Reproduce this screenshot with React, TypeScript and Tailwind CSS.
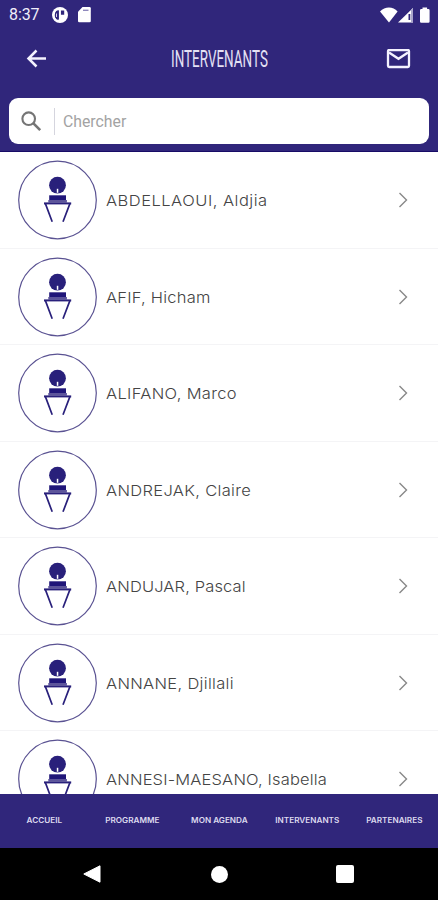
interface Speaker {
  name: string;
  tracking: string;
}

const speakers: Speaker[] = [
  { name: "ABDELLAOUI, Aldjia", tracking: "tracking-[0.45px]" },
  { name: "AFIF, Hicham", tracking: "tracking-[0.2px]" },
  { name: "ALIFANO, Marco", tracking: "tracking-[0.3px]" },
  { name: "ANDREJAK, Claire", tracking: "tracking-[0.3px]" },
  { name: "ANDUJAR, Pascal", tracking: "tracking-[0.12px]" },
  { name: "ANNANE, Djillali", tracking: "tracking-[0.28px]" },
  { name: "ANNESI-MAESANO, Isabella", tracking: "tracking-[0.14px]" },
];

const tabs = ["ACCUEIL", "PROGRAMME", "MON AGENDA", "INTERVENANTS", "PARTENAIRES"];

const StatusBar = () => (
  <div className="flex h-[29px] items-center justify-between pr-[8px] pl-[9px]">
    <div className="flex items-center">
      <span className="w-[43px] font-[Roboto,sans-serif] text-[16px] leading-none tracking-[-0.1px] text-[#f0eefa]">8:37</span>
      <svg width="16" height="16" viewBox="0 0 16 16">
        <circle cx="8" cy="8" r="8" fill="#fff" />
        <path d="M6.8 3.2A5 5 0 0 0 5.6 12.6H6.800zM8.800 3.500h3.400v4.300H8.800z" fill="#30267b" />
        <path d="M6.800 3.200h1.900v10H6.800z" fill="#fff" />
        <path d="M4.600 3.800C2.600 5.300 2.300 10 4.800 12.400h2V3.600z" fill="#30267b" />
        <path d="M4.200 6.500h.8v3.500h-.8z" fill="#fff" />
      </svg>
      <svg className="ml-[10px]" width="13" height="16" viewBox="0 0 13 16">
        <path d="M4.500 0H11.500a1.300 1.300 0 0 1 1.300 1.300V14a1.300 1.300 0 0 1-1.300 1.300H1.300A1.300 1.300 0 0 1 0 14V4.800z" fill="#fff" />
        <path d="M5 2.600h5.500v1.400H5z" fill="#8f89bd" />
      </svg>
    </div>
    <svg width="50" height="16" viewBox="0 0 50 16">
      <path d="M0 4.500C5-.8 13-.8 17.600 4.500L9 15.500z" fill="#fff" />
      <path d="M33 1V15.500H18z" fill="#fff" />
      <path d="M28.500 7h1.800v6h-1.800z" fill="#30267b" />
      <path d="M31 3v12.500h2V1z" fill="#aaa6cc" />
      <path d="M40 3.200a1.200 1.200 0 0 1 1.200-1.200h1.300V.5h4.600V2h1.300a1.200 1.200 0 0 1 1.200 1.200V14.600a1.200 1.200 0 0 1-1.200 1.200h-7.200a1.200 1.200 0 0 1-1.200-1.200z" fill="#fff" />
    </svg>
  </div>
);

const Header = () => (
  <div className="flex h-[60px] items-center justify-between pr-[27px] pl-[26px]">
    <svg width="22" height="20" viewBox="0 0 22 20" fill="none" stroke="#f4f2ff" strokeWidth="2.5">
      <path d="M20 9.500H3M10.500 1.500 2.500 9.500 10.500 17.500" />
    </svg>
    <h1 className="ml-[4px] scale-x-[0.56] font-[Roboto,sans-serif] text-[24px] leading-none font-normal text-[#e4e1f4]">
      INTERVENANTS
    </h1>
    <svg width="25" height="20" viewBox="0 0 25 20" fill="none" stroke="#f4f2ff" strokeWidth="2.3">
      <rect x="2" y="1" width="21" height="17" rx="1.2" />
      <path d="m3 3.500 9.500 6.300L22 3.500" />
    </svg>
  </div>
);

const SearchField = () => (
  <div className="mx-[9px] mt-[9px] flex h-[46px] items-center rounded-[9px] bg-white pl-[12px]">
    <svg width="21" height="21" viewBox="0 0 21 21" fill="none" stroke="#757575">
      <circle cx="7.700" cy="7.700" r="6.300" strokeWidth="2.100" />
      <path d="m12.200 12.200 7 7" strokeWidth="2.600" />
    </svg>
    <div className="ml-[11.5px] h-[27px] w-px bg-[#d5d5de]" />
    <span className="ml-[8.5px] pt-[2px] font-[Roboto,sans-serif] text-[15.8px] leading-none text-[#a3a3a3]">Chercher</span>
  </div>
);

const SpeakerAvatar = () => (
  <svg className="shrink-0" width="80" height="80" viewBox="0 0 80 80">
    <circle cx="40.500" cy="40" r="38.800" fill="#fff" stroke="#5a5292" strokeWidth="1.200" />
    <circle cx="40.500" cy="25.200" r="8.400" fill="#29207b" />
    <path d="M39.800 28.800h1.500v4h-1.500z" fill="#fff" />
    <path d="M32.200 35.300h16.800v5H32.200z" fill="#201679" />
    <path d="M31.300 40h18.600v2.500H31.300z" fill="#5c549b" />
    <path d="M27 42.400h27.200v2H27z" fill="#29207b" />
    <path d="M28.300 43.400 35.200 61.800M53 43.400 46 61.800" fill="none" stroke="#29207b" strokeWidth="1.700" />
  </svg>
);

const SpeakerRow = ({ name, tracking }: Speaker) => (
  <div className="flex h-[96.5px] shrink-0 items-center border-b border-[#f4f4f6] pt-[1px] pl-[17px]">
    <SpeakerAvatar />
    <span
      className={`ml-[9px] flex-1 origin-left scale-x-110 pt-[1px] font-[Inter,sans-serif] text-[15px] leading-none font-light whitespace-nowrap text-[#444] ${tracking}`}
    >
      {name}
    </span>
    <svg className="mr-[29px]" width="11" height="16" viewBox="0 0 11 16" fill="none" stroke="#888" strokeWidth="1.4">
      <path d="m1.500 1 7 7-7 7" />
    </svg>
  </div>
);

const TabBar = () => (
  <nav className="grid h-[54px] shrink-0 grid-cols-5 items-center bg-[#30267b]">
    {tabs.map((label) => (
      <span
        key={label}
        className="scale-x-[1.09] pl-px text-center font-[Inter,sans-serif] text-[7.5px] leading-none font-semibold whitespace-nowrap text-[#dedbef]"
      >
        {label}
      </span>
    ))}
  </nav>
);

const SystemNav = () => (
  <div className="flex h-[52px] shrink-0 items-center justify-between bg-black pr-[84px] pl-[83px]">
    <svg width="18" height="18" viewBox="0 0 18 18">
      <path d="M17 .8v16.400L.8 9z" fill="#fff" stroke="#fff" strokeWidth="1" strokeLinejoin="round" />
    </svg>
    <div className="ml-[1px] size-[17px] rounded-full bg-white" />
    <div className="size-[18px] rounded-[2px] bg-white" />
  </div>
);

export default function App() {
  return (
    <div className="flex h-[900px] w-[438px] flex-col overflow-hidden bg-white">
      <header className="h-[152px] shrink-0 border-b border-[#170b66] bg-[#30267b]">
        <StatusBar />
        <Header />
        <SearchField />
      </header>
      <main className="flex min-h-0 flex-1 flex-col overflow-hidden">
        {speakers.map((speaker) => (
          <SpeakerRow key={speaker.name} {...speaker} />
        ))}
      </main>
      <TabBar />
      <SystemNav />
    </div>
  );
}
